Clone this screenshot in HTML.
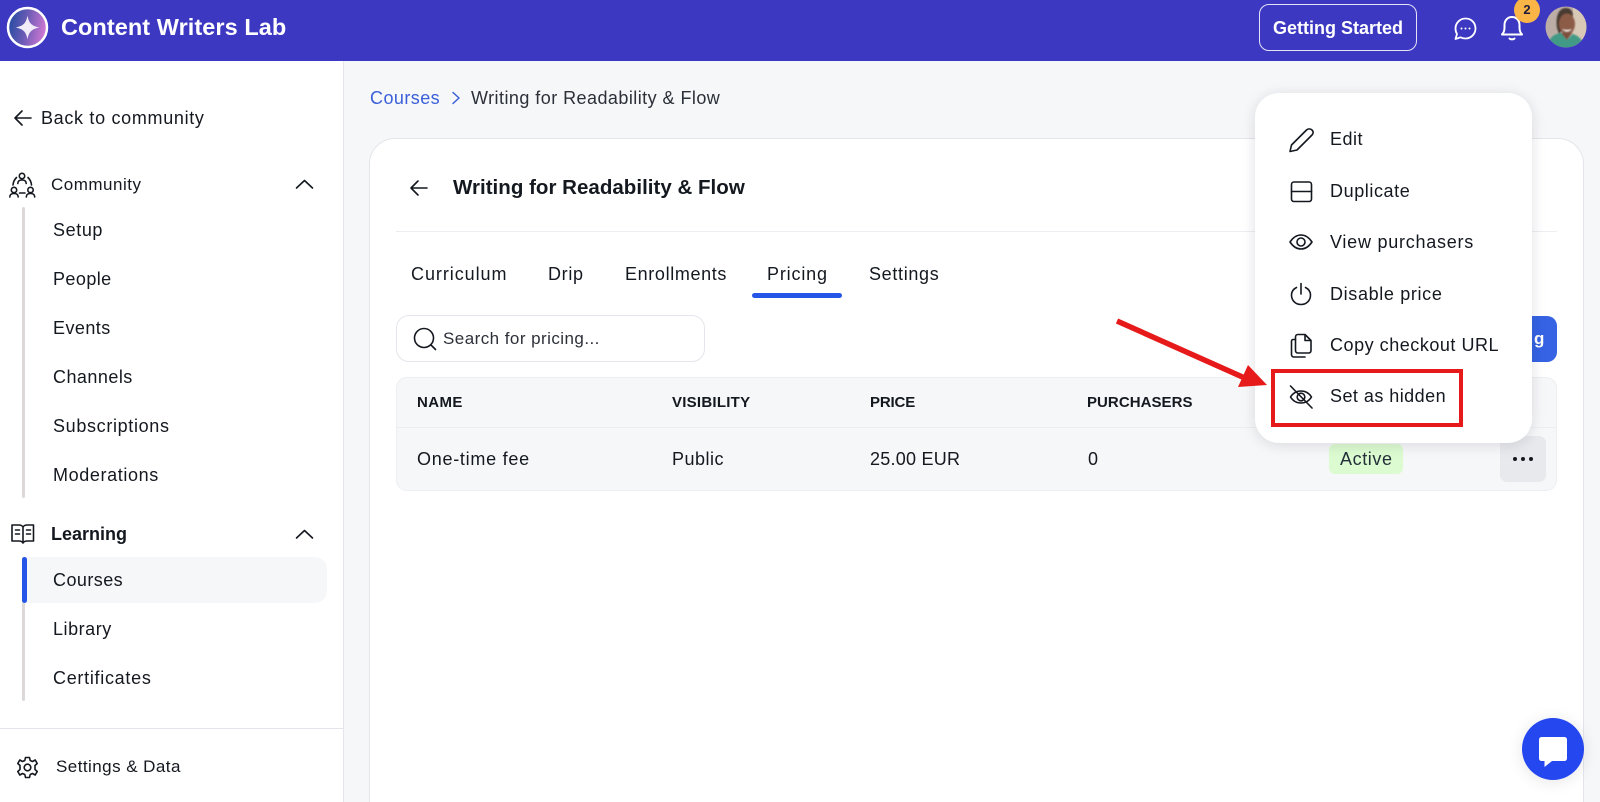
<!DOCTYPE html>
<html lang="en"><head><meta charset="utf-8"><title>Content Writers Lab</title>
<style>
*{box-sizing:border-box}
html,body{margin:0;padding:0;width:1600px;height:802px;overflow:hidden;background:#f6f7f9;font-family:"Liberation Sans",sans-serif;color:#14181f}
#r{position:relative;width:1600px;height:802px;overflow:hidden;background:#f6f7f9}
.a{position:absolute}
.t{position:absolute;white-space:nowrap;line-height:24px;font-size:18px}
svg{position:absolute;overflow:visible}
.i{fill:none;stroke:#14181f;stroke-width:1.6;stroke-linecap:round;stroke-linejoin:round}
.h{font-size:15px;font-weight:bold}
</style></head><body><div id="r">

<div class="a" style="left:0;top:0;width:1600px;height:61px;background:#3d38c2"></div>
<svg style="left:0;top:0" width="60" height="60">
<defs><linearGradient id="g" x1="0" x2="1" y1="0.1" y2="0.3"><stop offset="0" stop-color="#1d4aa0"/><stop offset=".5" stop-color="#6a5bb5"/><stop offset="1" stop-color="#cb77d2"/></linearGradient></defs>
<circle cx="27.5" cy="27.5" r="19.5" fill="url(#g)" stroke="#fff" stroke-width="2.5"/>
<path d="M27.5 15.5C28.8 23 31.500 26 39.500 27.500C31.500 29 28.800 32 27.500 39.500C26.200 32 23.500 29 15.500 27.500C23.500 26 26.200 23 27.500 15.500Z" fill="#f1ecf8"/>
</svg>
<div class="t" style="left:61px;top:15px;font-size:23.500px;font-weight:bold;color:#fff;letter-spacing:.06px">Content Writers Lab</div>
<div class="a" style="left:1259px;top:4px;width:158px;height:47px;border:1px solid #e5e4f6;border-radius:10px"></div>
<div class="t" style="left:1273px;top:16px;color:#fff;font-weight:bold;font-size:18px">Getting Started</div>
<svg style="left:1452px;top:15px" width="28" height="28"><path d="M13.500 3.500C19.500 3.500 23.500 8 23.500 13.500C23.500 19 19 23.500 13.500 23.500C11.500 23.500 10 23 8.500 22.300L3.500 24L5 19C4 17.500 3.500 15.500 3.500 13.500C3.500 8 8 3.500 13.500 3.500Z" fill="none" stroke="#fff" stroke-width="1.800" stroke-linejoin="round"/><circle cx="9.500" cy="13.500" r="1" fill="#fff"/><circle cx="13.500" cy="13.500" r="1" fill="#fff"/><circle cx="17.500" cy="13.500" r="1" fill="#fff"/></svg>
<svg style="left:1499px;top:14px" width="26" height="28"><path d="M3 20.500C5 18.500 5.500 16.500 5.500 13.500V11C5.500 6.500 8.500 3 13 3C17.500 3 20.500 6.500 20.500 11V13.500C20.500 16.500 21 18.500 23 20.500Z" fill="none" stroke="#fff" stroke-width="2" stroke-linejoin="round"/><path d="M10.500 24.500C11.500 25.700 14.500 25.700 15.500 24.500" fill="none" stroke="#fff" stroke-width="2" stroke-linecap="round"/></svg>
<div class="a" style="left:1514px;top:-3px;width:26px;height:26px;border-radius:50%;background:#fbb446;text-align:center;font-size:13px;line-height:26px;font-weight:bold;color:#1d1b3a">2</div>
<svg style="left:1545px;top:6px" width="42" height="42"><defs><clipPath id="c"><circle cx="21" cy="21" r="20.500"/></clipPath><filter id="b"><feGaussianBlur stdDeviation=".7"/></filter></defs><g clip-path="url(#c)"><rect width="42" height="42" fill="#bcaea6"/><rect x="28" width="14" height="42" fill="#d8c8b6"/><g filter="url(#b)"><path d="M12 22C10 8 15 2 21 2C27 2 29 8 27 12L14 28Z" fill="#4a3a32"/><ellipse cx="22" cy="18" rx="8" ry="10.500" fill="#8c5c46"/><path d="M17 23Q22 28 27 23Q22 25 17 23Z" fill="#f5eee8"/><path d="M2 42C4 31 9 28 16 27L22 34L28 28C34 30 38 34 40 42Z" fill="#3f9a86"/><path d="M16 27L22 34L27 27Z" fill="#7a4f3c"/></g></g></svg>

<div class="a" style="left:0;top:61px;width:344px;height:741px;background:#fff;border-right:1px solid #e4e6eb"></div>
<svg style="left:13px;top:108px" width="20" height="20" class="i"><path d="M18 10H2M9 3L2 10L9 17"/></svg>
<div class="t" style="left:41px;top:106px;letter-spacing:.68px">Back to community</div>

<svg style="left:9px;top:171px" width="28" height="28" class="i"><circle cx="13" cy="5" r="2.700"/><path d="M8.800 12.500C8.800 10 10.500 9 13 9C15.500 9 17.200 10 17.200 12.500"/><circle cx="5" cy="19" r="2.700"/><path d="M.8 26C.8 23.500 2.500 22.500 5 22.500C7.500 22.500 9.200 23.500 9.200 26"/><circle cx="21.500" cy="19" r="2.700"/><path d="M17.300 26C17.300 23.500 19 22.500 21.500 22.500C24 22.500 25.700 23.500 25.700 26"/><path d="M4 14C4.200 11 5.500 8.500 7.500 6.500M22.500 14C22.300 11 21 8.500 19 6.500M10.500 22H16"/></svg>
<div class="t" style="left:51px;top:173px;font-size:17px;letter-spacing:.5px">Community</div>
<svg style="left:295px;top:177px" width="20" height="14" class="i"><path d="M1.500 11L9.500 3.500L17.500 11"/></svg>

<div class="a" style="left:22px;top:207px;width:3px;height:291px;background:#ddd9d9;border-radius:2px"></div>
<div class="t" style="left:53px;top:218px;letter-spacing:.6px">Setup</div>
<div class="t" style="left:53px;top:267px;letter-spacing:.43px">People</div>
<div class="t" style="left:53px;top:316px;letter-spacing:.44px">Events</div>
<div class="t" style="left:53px;top:365px;letter-spacing:.46px">Channels</div>
<div class="t" style="left:53px;top:414px;letter-spacing:.66px">Subscriptions</div>
<div class="t" style="left:53px;top:463px;letter-spacing:.62px">Moderations</div>

<svg style="left:10px;top:522px" width="26" height="24" class="i"><path d="M13 5C12 3.500 11 3 9 3H2V19H9C11 19 12 19.500 13 21C14 19.500 15 19 17 19H23.500V3H17C15 3 14 3.500 13 5ZM13 5V21"/><path d="M5.500 8H9.500M5.500 12H9.500M16.500 8H20.500M16.500 12H20.500"/></svg>
<div class="t" style="left:51px;top:522px;font-weight:bold;font-size:18px">Learning</div>
<svg style="left:295px;top:527px" width="20" height="14" class="i"><path d="M1.500 11L9.500 3.500L17.500 11"/></svg>

<div class="a" style="left:22px;top:557px;width:3px;height:144px;background:#ddd9d9;border-radius:2px"></div>
<div class="a" style="left:24px;top:557px;width:303px;height:46px;background:#f6f7f9;border-radius:0 12px 12px 0"></div>
<div class="a" style="left:22px;top:557px;width:5px;height:46px;background:#2556e8;border-radius:3px"></div>
<div class="t" style="left:53px;top:568px;letter-spacing:.44px">Courses</div>
<div class="t" style="left:53px;top:617px;letter-spacing:.54px">Library</div>
<div class="t" style="left:53px;top:666px;letter-spacing:.71px">Certificates</div>
<div class="a" style="left:0;top:728px;width:343px;height:1px;background:#e3e5ea"></div>
<svg style="left:16px;top:756px" width="23" height="23" class="i"><circle cx="11.500" cy="11.500" r="3.300"/><path d="M9.500 1.500H13.500L14.200 4.500L16.500 5.500L19.200 4L21.200 7.500L19 9.500V13.500L21.200 15.500L19.200 19L16.500 17.500L14.200 18.500L13.500 21.500H9.500L8.800 18.500L6.500 17.500L3.800 19L1.800 15.500L4 13.500V9.500L1.800 7.500L3.800 4L6.500 5.500L8.800 4.500Z"/></svg>
<div class="t" style="left:56px;top:755px;font-size:17px;letter-spacing:.45px">Settings &amp; Data</div>

<div class="t" style="left:370px;top:86px;color:#3a5fd8;letter-spacing:.44px">Courses</div>
<svg style="left:451px;top:91px" width="12" height="14" fill="none" stroke="#3a5fd8" stroke-width="1.500" stroke-linecap="round" stroke-linejoin="round"><path d="M2 1.500L8 7L2 12.500"/></svg>
<div class="t" style="left:471px;top:86px;color:#2c3038;letter-spacing:.45px">Writing for Readability &amp; Flow</div>

<div class="a" style="left:369px;top:138px;width:1215px;height:700px;background:#fff;border:1px solid #e4e6eb;border-radius:26px"></div>
<svg style="left:409px;top:178px" width="20" height="20" class="i"><path d="M18 10H2M9 3L2 10L9 17"/></svg>
<div class="t" style="left:453px;top:176px;font-weight:bold;font-size:20.500px;letter-spacing:.02px">Writing for Readability &amp; Flow</div>
<div class="a" style="left:396px;top:231px;width:1161px;height:1px;background:#eceef1"></div>

<div class="t" style="left:411px;top:262px;letter-spacing:.94px">Curriculum</div>
<div class="t" style="left:548px;top:262px;letter-spacing:.67px">Drip</div>
<div class="t" style="left:625px;top:262px;letter-spacing:.64px">Enrollments</div>
<div class="t" style="left:767px;top:262px;letter-spacing:.83px">Pricing</div>
<div class="t" style="left:869px;top:262px;letter-spacing:.67px">Settings</div>
<div class="a" style="left:752px;top:293px;width:90px;height:5px;background:#2556e8;border-radius:3px"></div>

<div class="a" style="left:396px;top:315px;width:309px;height:47px;background:#fff;border:1px solid #e4e6eb;border-radius:13px"></div>
<svg style="left:412px;top:326px" width="26" height="26" class="i"><circle cx="12" cy="12" r="9.500"/><path d="M19 19L23.500 23.500"/></svg>
<div class="t" style="left:443px;top:327px;font-size:17px;color:#2c3038;letter-spacing:.45px">Search for pricing...</div>

<div class="a" style="left:396px;top:377px;width:1161px;height:114px;background:#f6f7f9;border:1px solid #eceef1;border-radius:11px"></div>
<div class="a" style="left:396px;top:427px;width:1161px;height:1px;background:#eceef1"></div>
<div class="t h" style="left:417px;top:391px;letter-spacing:.4px">NAME</div>
<div class="t h" style="left:672px;top:391px;letter-spacing:.25px">VISIBILITY</div>
<div class="t h" style="left:870px;top:391px;letter-spacing:-.15px">PRICE</div>
<div class="t h" style="left:1087px;top:391px;letter-spacing:.05px">PURCHASERS</div>
<div class="t" style="left:417px;top:447px;letter-spacing:.73px">One-time fee</div>
<div class="t" style="left:672px;top:447px;letter-spacing:.5px">Public</div>
<div class="t" style="left:870px;top:447px;letter-spacing:.24px">25.00 EUR</div>
<div class="t" style="left:1088px;top:447px">0</div>
<div class="a" style="left:1329px;top:444px;width:74px;height:30px;background:#dcfbd0;border-radius:6px"></div>
<div class="t" style="left:1340px;top:447px;color:#24303a;letter-spacing:.6px">Active</div>
<div class="a" style="left:1500px;top:436px;width:46px;height:46px;background:#e8e9ed;border-radius:7px"></div>
<svg style="left:1512px;top:454px" width="22" height="10" fill="#14181f"><circle cx="3" cy="5" r="2"/><circle cx="11" cy="5" r="2"/><circle cx="19" cy="5" r="2"/></svg>

<div class="a" style="left:1500px;top:316px;width:57px;height:46px;background:#3563e3;border-radius:10px"></div>
<div class="t" style="left:1534px;top:327px;color:#fff;font-weight:bold;font-size:17px">g</div>

<div class="a" style="left:1255px;top:93px;width:277px;height:350px;background:#fff;border-radius:24px;box-shadow:0 2px 14px rgba(20,24,40,.13)"></div>
<svg style="left:1288px;top:127px" width="26" height="26" class="i"><path d="M2 24.500L3.500 18L18.500 3C20 1.500 22.500 1.500 24 3C25.500 4.500 25.500 6.500 24 8L9 23Z"/></svg>
<div class="t" style="left:1330px;top:127px;letter-spacing:.5px">Edit</div>
<svg style="left:1290px;top:180px" width="23" height="23" class="i"><rect x="1.500" y="2" width="20" height="19.500" rx="2.500"/><path d="M1.500 11.500H21.500"/></svg>
<div class="t" style="left:1330px;top:179px;letter-spacing:.59px">Duplicate</div>
<svg style="left:1289px;top:231px" width="24" height="22" class="i"><path d="M1 11C4 6.500 7.500 4 12 4C16.500 4 20 6.500 23 11C20 15.500 16.500 18 12 18C7.500 18 4 15.500 1 11Z"/><circle cx="12" cy="11" r="4"/></svg>
<div class="t" style="left:1330px;top:230px;letter-spacing:.75px">View purchasers</div>
<svg style="left:1290px;top:282px" width="23" height="24" class="i"><path d="M11 1.500V12M6.500 5.500C3.500 7 1.500 9.500 1.500 13C1.500 18.500 5.500 22.500 11 22.500C16.500 22.500 20.500 18.500 20.500 13C20.500 9.500 18.500 7 15.500 5.500"/></svg>
<div class="t" style="left:1330px;top:282px;letter-spacing:.65px">Disable price</div>
<svg style="left:1290px;top:333px" width="24" height="25" class="i"><path d="M5.500 4C5.500 2.500 6.500 1.500 8 1.500H15L21 7.500V17.500C21 19 20 20 18.500 20H8C6.500 20 5.500 19 5.500 17.500ZM15 1.500V7.500H21"/><path d="M5.500 6.500H3C2 6.500 1.500 7.500 1.500 8.500V21.500C1.500 23 2.500 24 4 24H15"/></svg>
<div class="t" style="left:1330px;top:333px;letter-spacing:.53px">Copy checkout URL</div>
<svg style="left:1288px;top:384px" width="26" height="26" class="i" stroke-width="1.800"><path d="M2.500 13C5 9 8.500 7 13 7C17.500 7 21 9 23.500 13C21 17 17.500 19 13 19C8.500 19 5 17 2.500 13Z"/><circle cx="13" cy="13" r="3.800"/><path d="M2.500 2L24 24"/></svg>
<div class="t" style="left:1330px;top:384px;letter-spacing:.46px">Set as hidden</div>

<div class="a" style="left:1271px;top:369px;width:192px;height:58px;border:4.500px solid #e61a1a"></div>
<svg style="left:0;top:0" width="1600" height="802"><path d="M1117 321L1247 379" stroke="#e61a1a" stroke-width="5.500" fill="none"/><path d="M1267 385L1248 365L1238 387Z" fill="#e61a1a"/></svg>

<div class="a" style="left:1522px;top:718px;width:62px;height:62px;border-radius:50%;background:#2547ef;box-shadow:0 2px 16px rgba(0,0,0,.1)"></div>
<svg style="left:1537px;top:736px" width="33" height="33"><path d="M5 1H27C29 1 30 2 30 4V22C30 24 29 25 27 25H15L7.500 31V25H5C3 25 2 24 2 22V4C2 2 3 1 5 1Z" fill="#fff"/></svg>
</div></body></html>
